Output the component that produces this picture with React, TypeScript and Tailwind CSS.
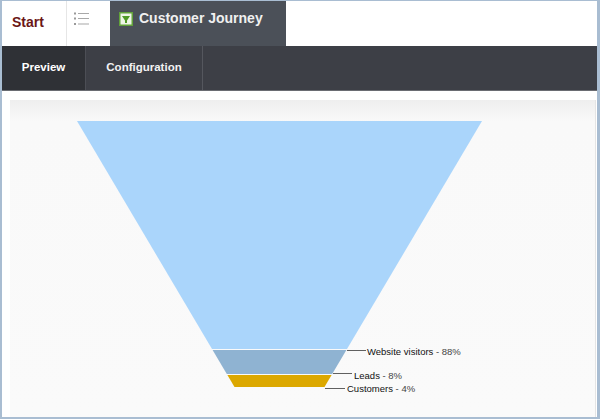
import React from "react";

function ListIcon() {
  return (
    <svg width="18" height="16" viewBox="0 0 18 16">
      {[1.5, 6.5, 12].map((y) => (
        <g key={y}>
          <rect x="1" y={y - 1} width="2" height="2" fill="#9a9a9a" />
          <rect x="5" y={y - 0.5} width="11" height="1" fill="#a8a8a8" />
        </g>
      ))}
    </svg>
  );
}

function FunnelIcon() {
  return (
    <svg width="14" height="14" viewBox="0 0 14 14">
      <rect x="0" y="0" width="14" height="14" fill="#62a23a" />
      <rect x="1.5" y="1.5" width="11" height="11" fill="#eef6e6" />
      <polygon points="3,4 11,4 8,8.5 8,11 6,11 6,8.5" fill="#4f9a25" />
    </svg>
  );
}

function Chart() {
  return (
    <svg width="585" height="316" viewBox="0 0 585 316" className="block">
      <polygon points="67,21 472,21 337,249 202,249" fill="#aad5fb" />
      <polygon points="202.6,250 336.4,250 322.2,274 216.8,274" fill="#8fb3d2" />
      <polygon points="217.4,275 321.6,275 314.5,287 224.5,287" fill="#dca800" />
      <g stroke="#606060" strokeWidth="1">
        <line x1="337" y1="250.5" x2="356" y2="250.5" />
        <line x1="323" y1="273.5" x2="342" y2="273.5" />
        <line x1="315" y1="288.5" x2="335" y2="288.5" />
      </g>
      <g fontFamily="'Liberation Sans', Arial, sans-serif" fontSize="9.5">
        <text x="357" y="254.5" fill="#111">
          Website visitors<tspan fill="#444"> - 88%</tspan>
        </text>
        <text x="344" y="278.5" fill="#111">
          Leads<tspan fill="#444"> - 8%</tspan>
        </text>
        <text x="337" y="292" fill="#111">
          Customers<tspan fill="#444"> - 4%</tspan>
        </text>
      </g>
    </svg>
  );
}

export default function App() {
  return (
    <div className="w-[600px] h-[419px] overflow-hidden bg-white border-t border-l-2 border-r-[3px] border-b-2 border-[#a9bdd2] flex flex-col font-['Liberation_Sans',Arial,sans-serif]">
      <div className="h-[45px] flex shrink-0 bg-white">
        <div className="w-[64px] pl-[10px] pt-[9px]">
          <span className="text-[14px] leading-[16px] font-bold text-[#6b1616]">Start</span>
        </div>
        <div className="w-[44px] border-l border-[#e6e6e6] pl-[6px] pt-[11px]">
          <ListIcon />
        </div>
        <div className="w-[176px] bg-[#4b5058] flex items-start gap-[6px] pl-[9px] pt-[11px]">
          <FunnelIcon />
          <span className="text-[14px] leading-[16px] font-bold text-[#f0f0f0] -mt-[2px]">Customer Journey</span>
        </div>
        <div className="flex-1" />
      </div>
      <div className="h-[45px] shrink-0 bg-[#3d3f46] border-b border-[#6a6c72] flex">
        <div className="w-[84px] bg-[#2f3136] border-r border-[#4c4e55] flex items-center justify-center">
          <span className="text-[11.5px] font-bold text-white">Preview</span>
        </div>
        <div className="w-[117px] border-r border-[#55575e] flex items-center justify-center">
          <span className="text-[11.5px] font-bold text-[#f2f2f2]">Configuration</span>
        </div>
      </div>
      <div className="flex-1 pl-[8px] pr-[2px] pt-[9px] flex">
        <div className="flex-1 border-r border-[#e4e4e4] bg-[linear-gradient(to_bottom,#eeeeee_0px,#f9f9f9_22px,#fafafa_100%)]">
          <Chart />
        </div>
      </div>
    </div>
  );
}
